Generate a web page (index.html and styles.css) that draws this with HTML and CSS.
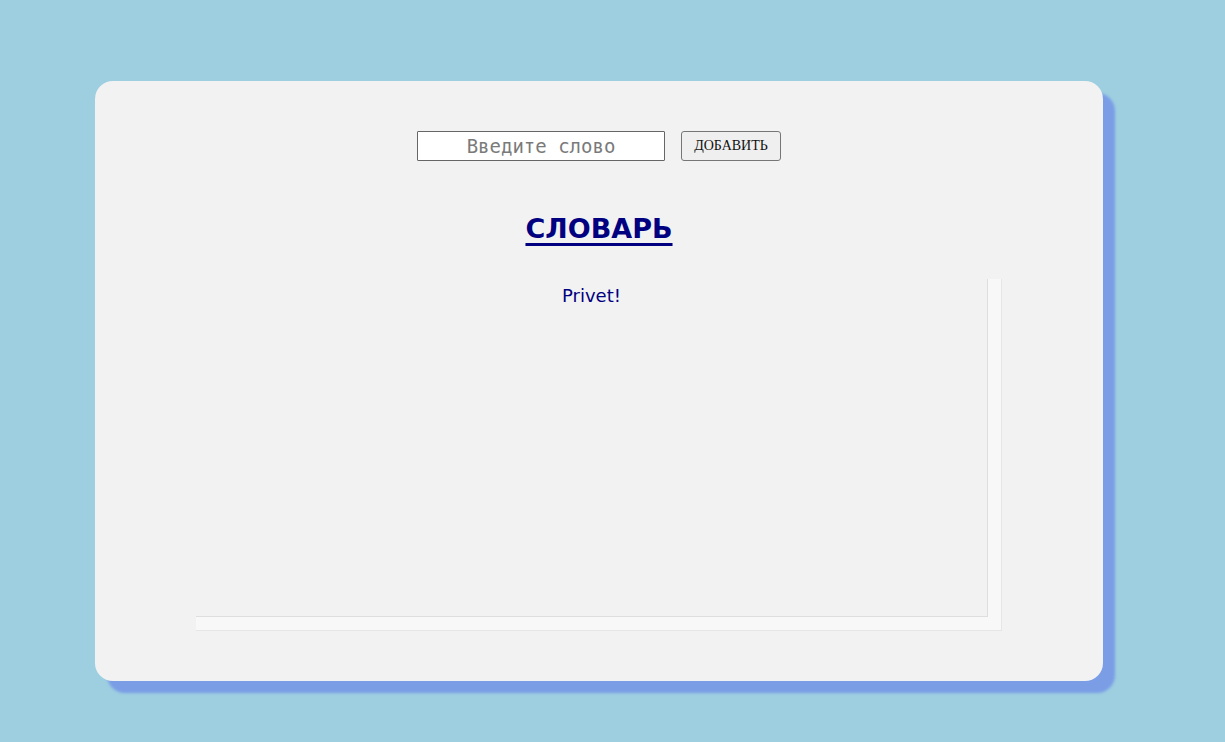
FILE: index.html
```html
<!DOCTYPE html>
<html lang="ru">
<head>
<meta charset="utf-8">
<title>Словарь</title>
<link rel="stylesheet" href="styles.css">
</head>
<body>
<main class="card">
  <form class="add-form">
    <input class="word-input" type="text" placeholder="Введите слово">
    <button class="add-btn" type="button">ДОБАВИТЬ</button>
  </form>
  <h1 class="title">СЛОВАРЬ</h1>
  <div class="list">
    <div class="list-inner">
      <p class="word">Privet!</p>
    </div>
  </div>
</main>
</body>
</html>
```

FILE: styles.css
```css
html, body {
  margin: 0;
  padding: 0;
}
body {
  background: #9ecfe0;
  font-family: "DejaVu Sans", Verdana, sans-serif;
  padding-top: 81px;
  height: 742px;
  box-sizing: border-box;
}
.card {
  width: 1008px;
  height: 600px;
  margin-left: 95px;
  box-sizing: border-box;
  background: #f2f2f2;
  border-radius: 18px;
  box-shadow: 12px 12px 3px #7a9de6;
  padding: 50px 0 0;
}
.add-form {
  display: flex;
  justify-content: center;
  gap: 16px;
  margin: 0;
}
.word-input {
  width: 248px;
  height: 30px;
  box-sizing: border-box;
  border: 1px solid #666;
  border-radius: 1px;
  background: #fff;
  font-family: "DejaVu Sans Mono", monospace;
  font-size: 19px;
  text-align: center;
  padding: 0 4px;
  color: #333;
}
.word-input::placeholder {
  color: #7a7a7a;
}
.add-btn {
  width: 100px;
  height: 30px;
  box-sizing: border-box;
  border: 1px solid #767676;
  border-radius: 3px;
  background: #efefef;
  font-family: "Liberation Serif", "Times New Roman", serif;
  font-size: 14px;
  color: #111;
  padding: 0;
}
.title {
  margin: 53px 0 0;
  text-align: center;
  font-size: 27px;
  font-weight: bold;
  color: #000080;
  text-decoration: underline;
  text-decoration-thickness: 3px;
  text-underline-offset: 5px;
  line-height: 30px;
}
.list {
  width: 80%;
  height: 352px;
  margin: 35px auto 0;
  box-sizing: border-box;
  background: #f8f8f8;
  border-right: 1px solid #e6e6e6;
  border-bottom: 1px solid #e6e6e6;
  padding: 0 13px 13px 0;
}
.list-inner {
  height: 100%;
  box-sizing: border-box;
  background: #f2f2f2;
  border-right: 1px solid #dedede;
  border-bottom: 1px solid #dedede;
  text-align: center;
  padding-top: 6px;
}
.word {
  margin: 0;
  font-size: 18px;
  line-height: 22px;
  color: #000080;
}
```
